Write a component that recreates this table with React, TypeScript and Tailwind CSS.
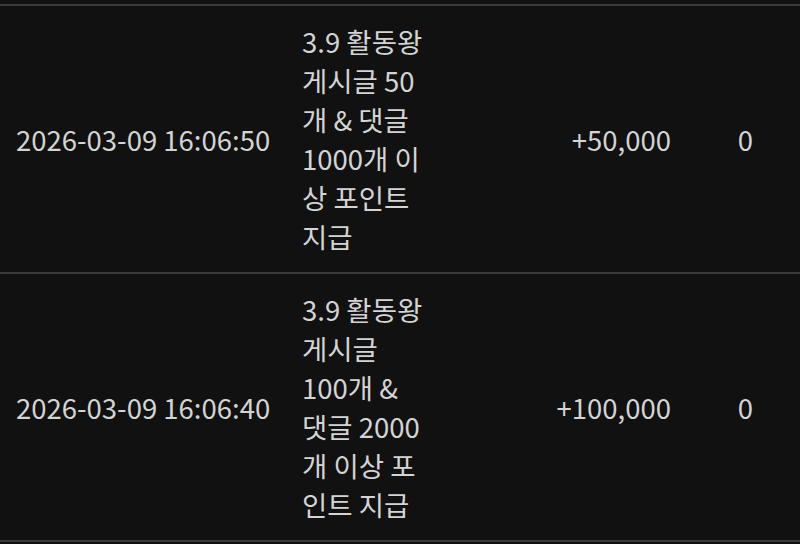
type Row = {
  date: string;
  desc: string;
  amount: string;
  balance: string;
};

const ROWS: Row[] = [
  {
    date: "2026-03-09 16:06:50",
    desc: "3.9 활동왕 게시글 50개 & 댓글 1000개 이상 포인트 지급",
    amount: "+50,000",
    balance: "0",
  },
  {
    date: "2026-03-09 16:06:40",
    desc: "3.9 활동왕 게시글 100개 & 댓글 2000개 이상 포인트 지급",
    amount: "+100,000",
    balance: "0",
  },
];

export default function App() {
  return (
    <div
      className="min-h-[544px] w-[800px] bg-[#111111] text-[27.5px] leading-[39px] text-[#d4d4d4]"
      style={{ fontFamily: '"Noto Sans CJK KR", "Noto Sans", sans-serif' }}
    >
      <div className="h-[4px]" />
      <div className="border-t-2 border-[#3a3a3a]">
        {ROWS.map((row) => (
          <div
            key={row.date}
            className="grid grid-cols-[286px_156px_245px_113px] items-center border-b-2 border-[#3a3a3a]"
          >
            <div className="px-4 py-4 whitespace-nowrap">{row.date}</div>
            <div className="px-4 py-4">{row.desc}</div>
            <div className="px-4 py-4 text-right">{row.amount}</div>
            <div className="py-4 pl-4 pr-3 text-center">{row.balance}</div>
          </div>
        ))}
      </div>
    </div>
  );
}
